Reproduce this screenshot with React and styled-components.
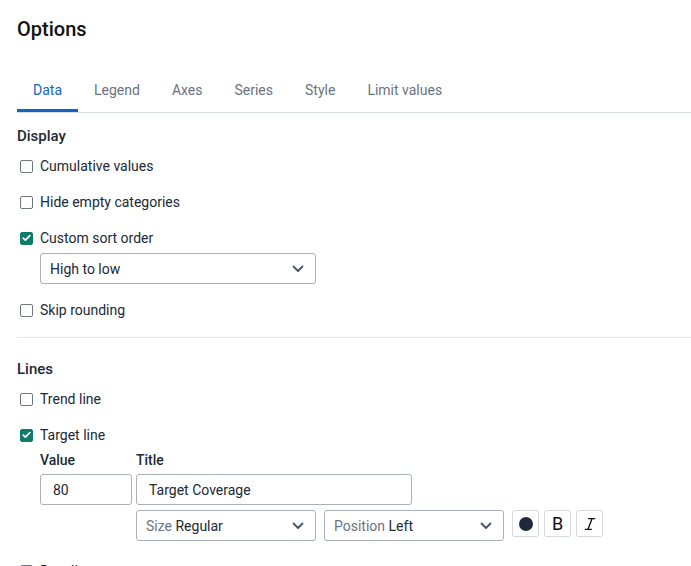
import React from 'react';
import styled, { createGlobalStyle } from 'styled-components';
import { Italic } from 'lucide-react';

const colors = {
  text: '#212934',
  muted: '#6b7280',
  blue: '#1565c0',
  teal: '#117a6a',
  border: '#a9b1bc',
  softBorder: '#d6dae0',
  divider: '#e3e6ea',
  tabLine: '#d3dae4'
};

const GlobalStyle = createGlobalStyle`
  body {
    margin: 0;
    background: #ffffff;
    font-family: Roboto, "Liberation Sans", Arial, sans-serif;
    color: ${colors.text};
  }
`;

const Page = styled.div`
  padding: 17px 0 0 17px;
  width: 674px;
  height: 549px;
  overflow: hidden;
`;

const Title = styled.h1`
  margin: 0;
  font-size: 20px;
  line-height: 24px;
  font-weight: 500;
  color: #111;
`;

const TabBar = styled.div`
  display: flex;
  margin-top: 27px;
  border-bottom: 1px solid ${colors.tabLine};
`;

const Tab = styled.div`
  padding: 12px 16px 9px;
  font-size: 14px;
  line-height: 20px;
  color: ${(p) => (p.$active ? colors.blue : colors.muted)};
  border-bottom: 3px solid ${(p) => (p.$active ? colors.blue : 'transparent')};
`;

const Section = styled.section`
  display: flex;
  flex-direction: column;
  padding: ${(p) => p.$top}px 0 ${(p) => p.$bottom}px;
  border-bottom: ${(p) => (p.$divider ? `1px solid ${colors.divider}` : 'none')};
`;

const Heading = styled.h2`
  margin: 0 0 10px;
  font-size: 15px;
  line-height: 20px;
  font-weight: 500;
  color: ${colors.text};
`;

const Rows = styled.div`
  display: flex;
  flex-direction: column;
  gap: 16px;
`;

const CheckRow = styled.label`
  display: flex;
  align-items: center;
  gap: 7px;
  padding-left: 3px;
  font-size: 14px;
  line-height: 20px;
  color: ${colors.text};
`;

const Box = styled.span`
  box-sizing: border-box;
  width: 13px;
  height: 13px;
  border-radius: 2px;
  border: 1px solid ${(p) => (p.$checked ? colors.teal : '#6f7782')};
  background: ${(p) => (p.$checked ? colors.teal : '#fff')};
  display: flex;
  align-items: center;
  justify-content: center;
`;

const Nested = styled.div`
  display: flex;
  flex-direction: column;
  padding-left: 23px;
  margin-top: -11px;
  margin-bottom: ${(p) => p.$after || 0}px;
`;

const SelectBox = styled.div`
  box-sizing: border-box;
  display: flex;
  align-items: center;
  justify-content: space-between;
  width: ${(p) => p.$width}px;
  height: 31px;
  padding: 0 11px 0 9px;
  border: 1px solid ${colors.border};
  border-radius: 3px;
  font-size: 14px;
  color: ${colors.text};
  background: #fff;
`;

const Muted = styled.span`
  color: ${colors.muted};
`;

const Input = styled.div`
  box-sizing: border-box;
  display: flex;
  align-items: center;
  width: ${(p) => p.$width}px;
  height: 31px;
  padding: 0 12px;
  border: 1px solid ${colors.border};
  border-radius: 3px;
  font-size: 14px;
  color: ${colors.text};
`;

const FieldGrid = styled.div`
  display: grid;
  grid-template-columns: 92px auto;
  column-gap: 4px;
  row-gap: 5px;
`;

const FieldLabel = styled.div`
  font-size: 14px;
  line-height: 20px;
  font-weight: 500;
  margin-bottom: -1px;
`;

const Controls = styled.div`
  display: flex;
  gap: 8px;
`;

const ButtonGroup = styled.div`
  display: flex;
  gap: 5px;
`;

const StyleButton = styled.button`
  box-sizing: border-box;
  width: 27px;
  height: 27px;
  padding: 0;
  display: flex;
  align-items: center;
  justify-content: center;
  border: 1px solid ${colors.softBorder};
  border-radius: 3px;
  background: #fff;
  font-family: Roboto, "Liberation Sans", Arial, sans-serif;
  font-size: 18px;
  font-weight: 400;
  color: #111;
`;

const Dot = styled.span`
  width: 14px;
  height: 14px;
  border-radius: 50%;
  background: #1e293b;
`;

const Chevron = () => (
  <svg width="12" height="8" viewBox="0 0 12 8" fill="none">
    <path d="M1.5 1.5 6 6l4.5-4.5" stroke="#4b5563" strokeWidth="1.8" strokeLinecap="round" strokeLinejoin="round" />
  </svg>
);

const Check = ({ checked, children }) => (
  <CheckRow>
    <Box $checked={checked}>
      {checked && (
        <svg width="9" height="8" viewBox="0 0 9 8" fill="none">
          <path d="M1.2 4.2 3.4 6.2 7.8 1.6" stroke="#fff" strokeWidth="1.7" strokeLinecap="round" strokeLinejoin="round" />
        </svg>
      )}
    </Box>
    {children}
  </CheckRow>
);

const Select = ({ width, label, value }) => (
  <SelectBox $width={width}>
    <span>
      {label && <Muted>{label} </Muted>}
      {value}
    </span>
    <Chevron />
  </SelectBox>
);

const tabs = ['Data', 'Legend', 'Axes', 'Series', 'Style', 'Limit values'];

export default function App() {
  return (
    <Page>
      <GlobalStyle />
      <Title>Options</Title>
      <TabBar>
        {tabs.map((t, i) => (
          <Tab key={t} $active={i === 0}>
            {t}
          </Tab>
        ))}
      </TabBar>

      <Section $top={13} $bottom={17} $divider>
        <Heading>Display</Heading>
        <Rows>
          <Check>Cumulative values</Check>
          <Check>Hide empty categories</Check>
          <Check checked>Custom sort order</Check>
          <Nested>
            <Select width={276} value="High to low" />
          </Nested>
          <Check>Skip rounding</Check>
        </Rows>
      </Section>

      <Section $top={21} $bottom={16}>
        <Heading>Lines</Heading>
        <Rows>
          <Check>Trend line</Check>
          <Check checked>Target line</Check>
          <Nested $after={4}>
            <FieldGrid>
              <FieldLabel>Value</FieldLabel>
              <FieldLabel>Title</FieldLabel>
              <Input $width={92}>80</Input>
              <Input $width={276}>Target Coverage</Input>
              <div />
              <Controls>
                <Select width={180} label="Size" value="Regular" />
                <Select width={180} label="Position" value="Left" />
                <ButtonGroup>
                  <StyleButton>
                    <Dot />
                  </StyleButton>
                  <StyleButton>B</StyleButton>
                  <StyleButton>
                    <Italic size={16} strokeWidth={2} color="#111" />
                  </StyleButton>
                </ButtonGroup>
              </Controls>
            </FieldGrid>
          </Nested>
          <Check>Baseline</Check>
        </Rows>
      </Section>
    </Page>
  );
}
